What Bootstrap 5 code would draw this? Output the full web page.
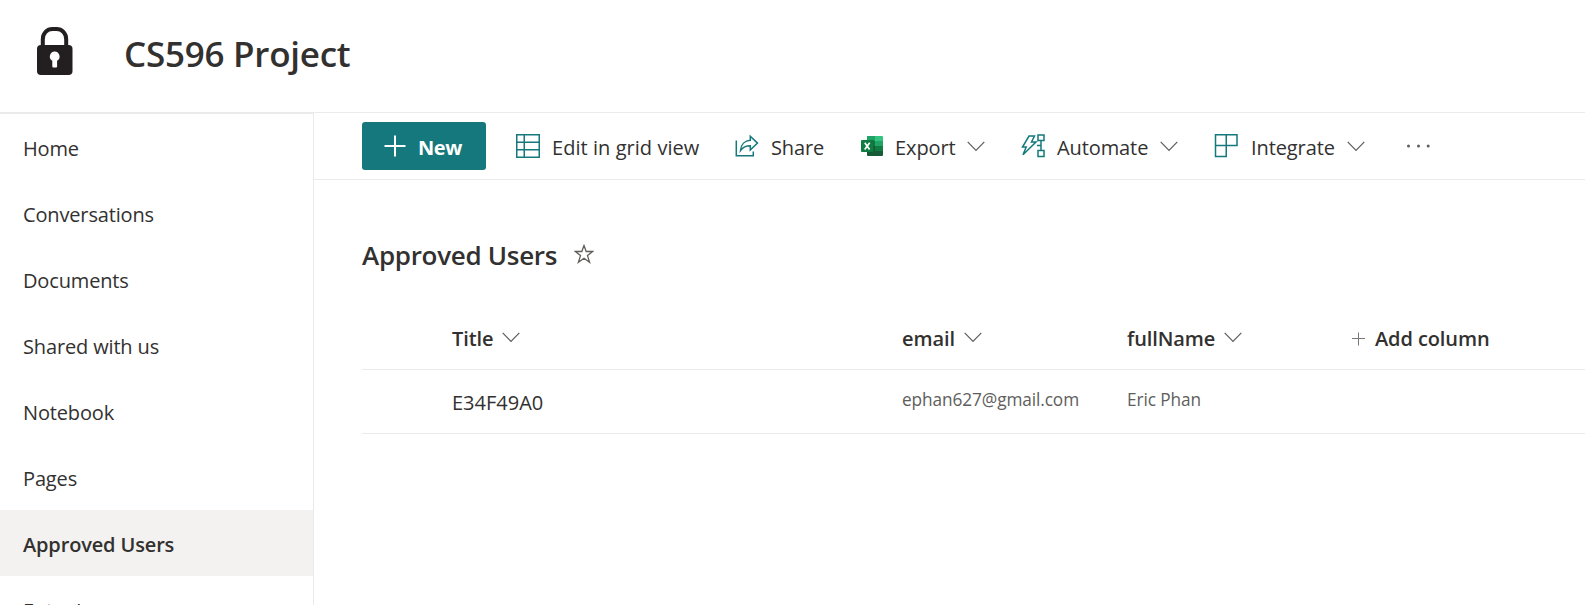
<!DOCTYPE html>
<html lang="en">
<head>
<meta charset="utf-8">
<meta name="viewport" content="width=device-width, initial-scale=1">
<title>CS596 Project - Approved Users</title>
<link href="https://cdn.jsdelivr.net/npm/bootstrap@5.3.0/dist/css/bootstrap.min.css" rel="stylesheet">
<style>
body{font-family:"Open Sans","Noto Sans",sans-serif;font-size:20px;line-height:28px;color:#323130;height:100vh;overflow:hidden}
svg{display:block;flex:none;fill:none}
.site-head{height:113px;border-bottom:1px solid #eaeaea}
.site-logo{margin:27px 0 0 36px}
.site-title{font-size:35px;line-height:48px;font-weight:600;margin:30px 0 0 51px;letter-spacing:-.25px}
.side{width:314px;border-top:1px solid #eaeaea;border-right:1px solid #eaeaea}
.side .nav-link{height:66px;flex:none;padding:21px 22px 0 23px;color:#323130;letter-spacing:-.15px;white-space:nowrap}
.side .nav-link.active{background:#f3f2f1;font-weight:600;letter-spacing:-.15px}
.cmds{display:grid;grid-template-columns:154px 219px 126px 160px 193px 192px auto;height:67px;border-bottom:1px solid #eaeaea;padding-left:48px}
.cmds .btn{--bs-btn-padding-x:0;--bs-btn-padding-y:0;--bs-btn-font-size:20px;--bs-btn-color:#323130;--bs-btn-border-width:0px;line-height:28px;white-space:nowrap;letter-spacing:-.1px;display:flex;align-items:center;gap:12px;justify-self:start}
.cmds .btn span{padding-top:3px}
.cmds .btn-grid{letter-spacing:.05px}
.cmds .btn-new{--bs-btn-color:#fff;--bs-btn-bg:#15787c;--bs-btn-hover-bg:#106468;--bs-btn-hover-color:#fff;--bs-btn-border-radius:3px;width:124px;height:48px;font-weight:700;letter-spacing:-.4px;padding-left:22px}
.list-title{font-size:26px;line-height:36px;font-weight:600;letter-spacing:-.3px}
.list-head{padding:57px 0 0 48px;gap:17px}
.list-head svg{margin-top:7px}
.grid-line{display:grid;grid-template-columns:90px 450px 225px 225px 1fr;border-bottom:1px solid #eaeaea;margin-left:48px;height:64px;padding-top:19px}
.grid-line.heads{height:68px;padding-top:23px;margin-top:29px;font-weight:600;letter-spacing:-.1px}
.heads .d-flex{gap:9px}
.heads svg{margin-top:7px}
.dim{font-size:17.25px;color:#605e5c;letter-spacing:-.1px;margin-top:-3px}
</style>
</head>
<body class="d-flex flex-column bg-white">
<svg width="0" height="0" class="position-absolute">
<symbol id="chev" viewBox="0 0 18 11"><path d="M.7.8 9 9.500 17.300.8" stroke="#605e5c" stroke-width="1.200"/></symbol>
</svg>
<header class="site-head d-flex align-items-start flex-shrink-0">
<svg class="site-logo" width="37" height="49" viewBox="0 0 37 49"><path d="M6.800 20V12.500C6.800 6 11 2 16.500 2H20.500C26 2 30.200 6 30.200 12.500V20" stroke="#231f20" stroke-width="4"/><rect x="1" y="18" width="35.500" height="30" rx="4" fill="#231f20"/><path d="M18.700 24.500a5 5 0 0 0-2.400 9.300V39.500a1 1 0 0 0 1 1h2.800a1 1 0 0 0 1-1V33.800A5 5 0 0 0 18.700 24.500z" fill="#fff"/></svg>
<h1 class="site-title mb-0">CS596 Project</h1>
</header>
<div class="d-flex flex-grow-1 overflow-hidden">
<nav class="side nav flex-column flex-nowrap flex-shrink-0">
<a class="nav-link" href="#">Home</a>
<a class="nav-link" href="#">Conversations</a>
<a class="nav-link" href="#">Documents</a>
<a class="nav-link" href="#">Shared with us</a>
<a class="nav-link" href="#">Notebook</a>
<a class="nav-link" href="#">Pages</a>
<a class="nav-link active" href="#">Approved Users</a>
<a class="nav-link" href="#">Entry Log</a>
</nav>
<main class="flex-grow-1">
<div class="cmds align-items-center">
<button class="btn btn-new"><svg width="22" height="22" viewBox="0 0 22 22"><path d="M11 .5v21M.5 11h21" stroke="#fff" stroke-width="2"/></svg><span>New</span></button>
<button class="btn btn-grid"><svg width="24" height="24" viewBox="0 0 24 24" stroke="#15787c" stroke-width="1.500"><path d="M.75.75h22.500v22.500H.75zM.75 8.250h22.500M.75 15.750h22.500M8.250.75v22.500"/></svg><span>Edit in grid view</span></button>
<button class="btn"><svg width="24" height="24" viewBox="0 0 24 24" stroke="#15787c" stroke-width="1.500"><path d="M1.300 6.500V21.700H18.300V17.500"/><path d="M15.300 2.200 22.500 9.100 15.300 16V11.800C10.800 11.800 8 13.200 5.500 16.600 6 10.500 9.800 6.500 15.300 6.300z"/></svg><span>Share</span></button>
<button class="btn"><svg width="22" height="20" viewBox="0 0 22 20"><path fill="#21a366" d="M6 0h8v5H6z"/><path fill="#33c481" d="M14 0h7a1 1 0 0 1 1 1v4h-8z"/><path fill="#107c41" d="M6 5h8v5H6z"/><path fill="#21a366" d="M14 5h8v5h-8z"/><path fill="#185c37" d="M6 10h8v5h8v4a1 1 0 0 1-1 1H7a1 1 0 0 1-1-1z"/><path fill="#107c41" d="M14 10h8v5h-8z"/><path fill="#0b4a2a" opacity=".5" d="M6 4h7v12.500H6z"/><rect y="4" width="12.500" height="12" rx="1" fill="#107c41"/><path d="m3.800 6.800 4.800 6.600M8.700 6.800 3.700 13.400" stroke="#fff" stroke-width="1.700"/></svg><span>Export</span><svg width="18" height="11" style="margin-left:-1px"><use href="#chev"/></svg></button>
<button class="btn"><svg width="24" height="24" viewBox="0 0 24 24" stroke="#15787c" stroke-width="1.500"><path d="M8 2H13.500L10.500 8H15L2 20.800 5.200 13H1.500zM17 1h6v5.500h-6zM17 16.500h6v6h-6zM20 6.500v10M16 11.500h4"/></svg><span>Automate</span><svg width="18" height="11"><use href="#chev"/></svg></button>
<button class="btn"><svg width="24" height="24" viewBox="0 0 24 24" stroke="#15787c" stroke-width="1.500"><path d="M1.500.75H23V11.500H1.500zM12.250.75V22.500H1.500V11"/></svg><span class="ps-0" style="margin-left:1px">Integrate</span><svg width="18" height="11"><use href="#chev"/></svg></button>
<button class="btn" aria-label="More"><svg width="24" height="4" viewBox="0 0 24 4"><g fill="#605e5c"><circle cx="2.500" cy="2" r="1.500"/><circle cx="12.500" cy="2" r="1.500"/><circle cx="22.200" cy="2" r="1.500"/></g></svg></button>
</div>
<div class="list-head d-flex"><h2 class="list-title mb-0">Approved Users</h2>
<svg width="20" height="20" viewBox="0 0 20 20"><path d="M10 1.500 12.200 7.500H18.700L13.500 11.600 15.600 18.300 10 14.200 4.400 18.300 6.500 11.600 1.300 7.500H7.800z" stroke="#605e5c" stroke-width="1.300"/></svg></div>
<div class="grid-line heads"><span></span>
<span class="d-flex">Title<svg width="18" height="11"><use href="#chev"/></svg></span>
<span class="d-flex">email<svg width="18" height="11"><use href="#chev"/></svg></span>
<span class="d-flex">fullName<svg width="18" height="11"><use href="#chev"/></svg></span>
<span class="d-flex"><svg width="14" height="14" viewBox="0 0 14 14"><path d="M6.500 .5v13M0 6.500h13" stroke="#797775"/></svg>Add column</span></div>
<div class="grid-line"><span></span><span>E34F49A0</span><span class="dim">ephan627@gmail.com</span><span class="dim">Eric Phan</span></div>
</main>
</div>
<script src="https://cdn.jsdelivr.net/npm/bootstrap@5.3.0/dist/js/bootstrap.bundle.min.js"></script>
</body>
</html>
